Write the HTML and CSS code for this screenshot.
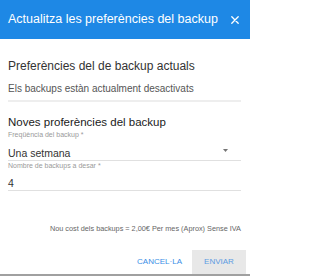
FILE: index.html
```html
<!DOCTYPE html>
<html lang="ca">
<head>
<meta charset="utf-8">
<title>Actualitza les preferències del backup</title>
<link rel="stylesheet" href="styles.css">
</head>
<body>
<div class="dialog">
  <header class="dlg-head">
    <h1 class="dlg-title">Actualitza les preferències del backup</h1>
    <button class="dlg-close" aria-label="Tanca">
      <svg width="8" height="8" viewBox="0 0 8 8"><path d="M0.8 0.8 L7.2 7.2 M7.2 0.8 L0.8 7.2" stroke="#fff" stroke-width="1.3" stroke-linecap="round"/></svg>
    </button>
  </header>
  <div class="dlg-body">
    <section class="current">
      <h2 class="current-title">Preferències del de backup actuals</h2>
      <p class="current-text">Els backups estàn actualment desactivats</p>
    </section>
    <section class="new">
      <h2 class="new-title">Noves proferències del backup</h2>
      <div class="field">
        <label class="field-label">Freqüència del backup *</label>
        <div class="field-control">
          <span>Una setmana</span>
          <svg class="caret" width="5" height="3" viewBox="0 0 5 3"><path d="M0 0 H5 L2.5 3 Z" fill="#757575"/></svg>
        </div>
      </div>
      <div class="field">
        <label class="field-label">Nombre de backups a desar *</label>
        <div class="field-control field-input"><span>4</span></div>
      </div>
    </section>
    <p class="cost">Nou cost dels backups = 2,00€ Per mes (Aprox) Sense IVA</p>
  </div>
  <footer class="actions">
    <button class="btn btn-cancel">CANCEL·LA</button>
    <button class="btn btn-send">ENVIAR</button>
  </footer>
</div>
</body>
</html>
```
FILE: styles.css
```css
* { box-sizing: border-box; }
html, body { margin: 0; padding: 0; background: #fff; }
body {
  font-family: "Liberation Sans", Arial, sans-serif;
}
.dialog {
  background: #fff;
  width: 250px;
  height: 276px;
  display: flex;
  flex-direction: column;
  border-bottom: 2px solid #a0a0a0;
}
.dlg-head {
  height: 39px;
  flex: none;
  background: #1e88e5;
  display: flex;
  align-items: center;
  justify-content: space-between;
  padding: 0 11px 0 8px;
}
.dlg-title {
  margin: 0;
  font-size: 12.5px;
  line-height: 15px;
  font-weight: normal;
  color: #fff;
  white-space: nowrap;
}
.dlg-close {
  border: 0;
  background: none;
  padding: 0;
  width: 8px;
  height: 8px;
  display: flex;
  margin-top: 1px;
}
.dlg-body {
  padding: 19px 9px 0 8px;
}
.current {
  padding-bottom: 4px;
  border-bottom: 2px solid #eeeeee;
}
.current-title {
  margin: 0;
  font-size: 12px;
  line-height: 16px;
  font-weight: normal;
  color: #333;
}
.current-text {
  margin: 7.5px 0 0;
  font-size: 10px;
  line-height: 14px;
  color: #555;
}
.new { margin-top: 13px; }
.new-title {
  margin: 0;
  font-size: 11.5px;
  line-height: 15px;
  font-weight: normal;
  color: #1a1a1a;
}
.field-label {
  display: block;
  font-size: 7px;
  line-height: 9px;
  color: #9a9a9a;
}
.field + .field { margin-top: 0.5px; }
.field-control {
  display: flex;
  align-items: center;
  justify-content: space-between;
  padding: 7px 13px 0 0;
  font-size: 10.5px;
  line-height: 14px;
  color: #333;
  border-bottom: 1px solid #e0e0e0;
}
.field-input { padding-top: 5.7px; }
.caret { margin-top: -4px; }
.cost {
  margin: 33px 0 0;
  text-align: right;
  font-size: 7.3px;
  line-height: 10px;
  color: #666;
  white-space: nowrap;
}
.actions {
  margin-top: auto;
  display: flex;
  justify-content: flex-end;
  gap: 2px;
  padding: 0 4px 0 0;
}
.btn {
  border: 0;
  font-family: "Liberation Sans", Arial, sans-serif;
  font-size: 8px;
  line-height: 23px;
  height: 24px;
  padding: 0 8px 1px;
  background: none;
}
.btn-cancel { color: #3a8ee6; }
.btn-send {
  width: 54px;
  padding: 0 0 1px;
  background: #e8e8e8;
  color: #5c9be2;
}
```
